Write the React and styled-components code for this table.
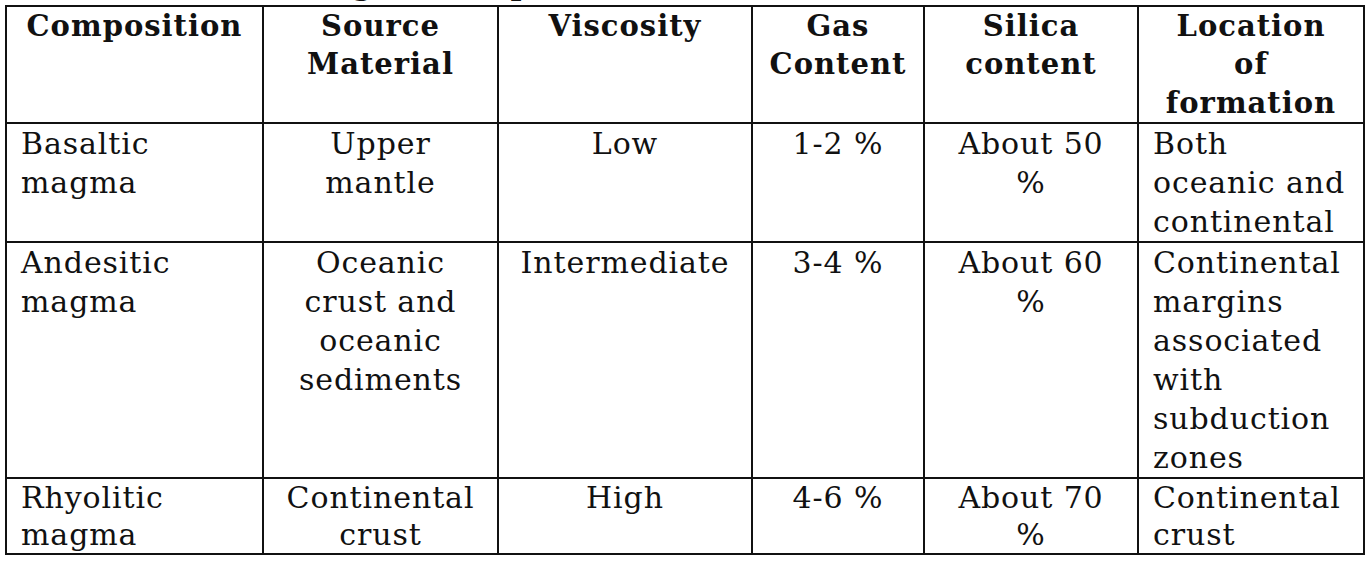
import React from "react";
import styled, { createGlobalStyle } from "styled-components";

const GlobalStyle = createGlobalStyle`
  html, body {
    margin: 0;
    padding: 0;
    background: #ffffff;
  }
  body {
    font-family: "DejaVu Serif", "Liberation Serif", serif;
    color: #111111;
  }
`;

const columns = [
  { key: "composition", title: ["Composition"], width: 257, align: "left" },
  { key: "source", title: ["Source", "Material"], width: 235, align: "center" },
  { key: "viscosity", title: ["Viscosity"], width: 254, align: "center" },
  { key: "gas", title: ["Gas", "Content"], width: 172, align: "center" },
  { key: "silica", title: ["Silica", "content"], width: 214, align: "center" },
  { key: "location", title: ["Location", "of", "formation"], width: 226, align: "left" },
];

const rows = [
  {
    composition: ["Basaltic", "magma"],
    source: ["Upper", "mantle"],
    viscosity: ["Low"],
    gas: ["1-2 %"],
    silica: ["About 50", "%"],
    location: ["Both", "oceanic and", "continental"],
  },
  {
    composition: ["Andesitic", "magma"],
    source: ["Oceanic", "crust and", "oceanic", "sediments"],
    viscosity: ["Intermediate"],
    gas: ["3-4 %"],
    silica: ["About 60", "%"],
    location: ["Continental", "margins", "associated", "with", "subduction", "zones"],
  },
  {
    composition: ["Rhyolitic", "magma"],
    source: ["Continental", "crust"],
    viscosity: ["High"],
    gas: ["4-6 %"],
    silica: ["About 70", "%"],
    location: ["Continental", "crust"],
    tight: true,
  },
];

export default function App() {
  return (
    <>
      <GlobalStyle />
      <Page>
        {/* caption sits mostly above the crop, only descenders show */}
        <Caption>
          <CaptionText>Table 1.1: Magma Composition</CaptionText>
        </Caption>
        <Table>
          <colgroup>
            {columns.map((col) => (
              <col key={col.key} style={{ width: col.width }} />
            ))}
          </colgroup>
          <thead>
            <tr>
              {columns.map((col) => (
                <HeadCell key={col.key}>
                  {col.title.map((line) => (
                    <Line key={line}>{line}</Line>
                  ))}
                </HeadCell>
              ))}
            </tr>
          </thead>
          <tbody>
            {rows.map((row, i) => (
              <tr key={i}>
                {columns.map((col) => (
                  <Cell key={col.key} $align={col.align} $tight={row.tight}>
                    {row[col.key].map((line, j) => (
                      <Line key={j}>{line}</Line>
                    ))}
                  </Cell>
                ))}
              </tr>
            ))}
          </tbody>
        </Table>
      </Page>
    </>
  );
}

const Page = styled.div`
  padding: 0 0 0 5px;
  width: 1358px;
`;

const Caption = styled.div`
  height: 5px;
  overflow: hidden;
  padding-left: 120px;
`;

const CaptionText = styled.div`
  margin-top: -30px;
  font-size: 30px;
  font-weight: 700;
  line-height: 30px;
  white-space: nowrap;
`;

const Table = styled.table`
  width: 1358px;
  table-layout: fixed;
  border-collapse: collapse;
  border: 2px solid #111111;
`;

const HeadCell = styled.th`
  border: 2px solid #111111;
  padding: 0 2px;
  vertical-align: top;
  text-align: center;
  font-size: 29px;
  font-weight: 700;
  line-height: 38.4px;
  letter-spacing: 1px;
`;

const Cell = styled.td`
  border: 2px solid #111111;
  padding: ${(p) => (p.$align === "center" ? "0 2px" : "0 2px 0 14px")};
  vertical-align: top;
  text-align: ${(p) => p.$align};
  font-size: 30px;
  font-weight: 400;
  line-height: ${(p) => (p.$tight ? "37px" : "39px")};
  letter-spacing: 0.9px;
`;

const Line = styled.div`
  white-space: nowrap;
`;
